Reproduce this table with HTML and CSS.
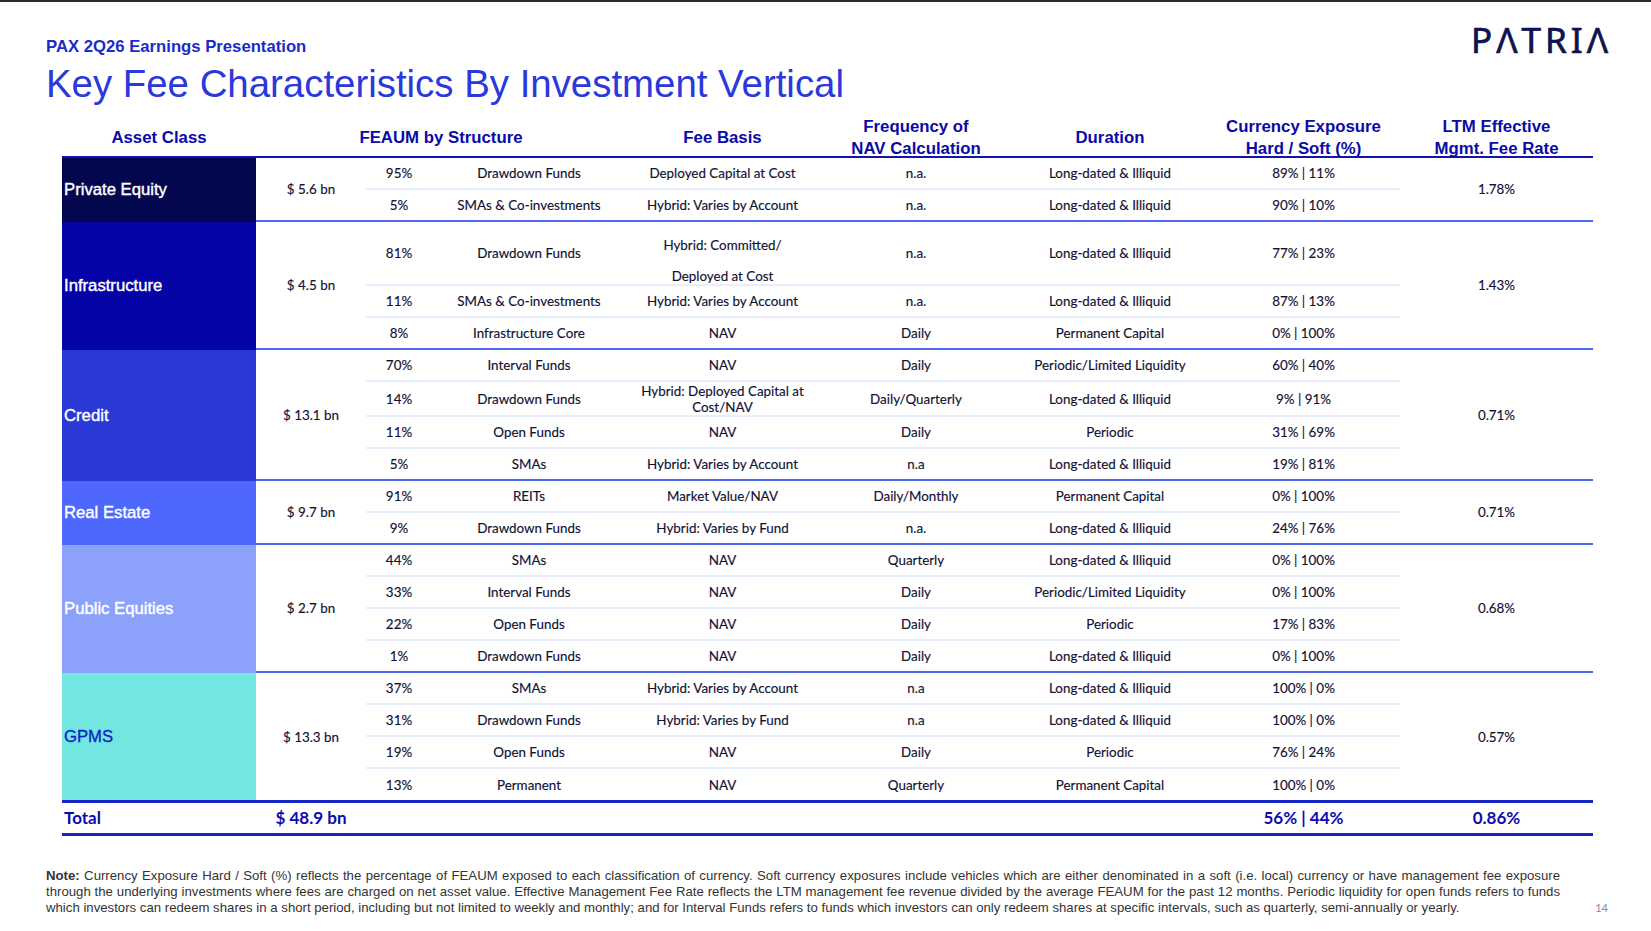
FILE: index.html
```html
<!DOCTYPE html>
<html lang="en">
<head>
<meta charset="utf-8">
<title>Key Fee Characteristics By Investment Vertical</title>
<link rel="stylesheet" href="styles.css">
</head>
<body>
<div class="slide">
  <header class="top">
    <div class="titles">
      <div class="kicker">PAX 2Q26 Earnings Presentation</div>
      <h1 class="title">Key Fee Characteristics By Investment Vertical</h1>
    </div>
    <div class="logo" aria-label="PATRIA">PΛTRIΛ</div>
  </header>

  <table class="fees">
    <colgroup>
      <col class="c-asset"><col class="c-amt"><col class="c-pct"><col class="c-wide"><col class="c-wide2"><col class="c-wide"><col class="c-wide"><col class="c-wide2"><col class="c-wide2">
    </colgroup>
    <thead>
      <tr>
        <th><div class="hd">Asset Class</div></th>
        <th colspan="3"><div class="hd">FEAUM by Structure</div></th>
        <th><div class="hd">Fee Basis</div></th>
        <th><div class="hd">Frequency of<br>NAV Calculation</div></th>
        <th><div class="hd">Duration</div></th>
        <th><div class="hd">Currency Exposure<br>Hard / Soft (%)</div></th>
        <th><div class="hd">LTM Effective<br>Mgmt. Fee Rate</div></th>
      </tr>
    </thead>
    <tbody>
      <!-- Private Equity -->
      <tr>
        <td class="ac pe" rowspan="2">Private Equity</td>
        <td class="amt end" rowspan="2">$ 5.6 bn</td>
        <td class="sub">95%</td><td class="sub">Drawdown Funds</td><td class="sub">Deployed Capital at Cost</td><td class="sub">n.a.</td><td class="sub">Long-dated &amp; Illiquid</td><td class="sub">89% | 11%</td>
        <td class="rate end" rowspan="2">1.78%</td>
      </tr>
      <tr class="last">
        <td class="sub">5%</td><td class="sub">SMAs &amp; Co-investments</td><td class="sub">Hybrid: Varies by Account</td><td class="sub">n.a.</td><td class="sub">Long-dated &amp; Illiquid</td><td class="sub">90% | 10%</td>
      </tr>

      <!-- Infrastructure -->
      <tr class="tall">
        <td class="ac inf" rowspan="3">Infrastructure</td>
        <td class="amt end" rowspan="3">$ 4.5 bn</td>
        <td class="sub">81%</td><td class="sub">Drawdown Funds</td>
        <td class="sub split"><div>Hybrid: Committed/</div><div class="second">Deployed at Cost</div></td>
        <td class="sub">n.a.</td><td class="sub">Long-dated &amp; Illiquid</td><td class="sub">77% | 23%</td>
        <td class="rate end" rowspan="3">1.43%</td>
      </tr>
      <tr>
        <td class="sub">11%</td><td class="sub">SMAs &amp; Co-investments</td><td class="sub">Hybrid: Varies by Account</td><td class="sub">n.a.</td><td class="sub">Long-dated &amp; Illiquid</td><td class="sub">87% | 13%</td>
      </tr>
      <tr class="last">
        <td class="sub">8%</td><td class="sub">Infrastructure Core</td><td class="sub">NAV</td><td class="sub">Daily</td><td class="sub">Permanent Capital</td><td class="sub">0% | 100%</td>
      </tr>

      <!-- Credit -->
      <tr>
        <td class="ac cr" rowspan="4">Credit</td>
        <td class="amt end" rowspan="4">$ 13.1 bn</td>
        <td class="sub">70%</td><td class="sub">Interval Funds</td><td class="sub">NAV</td><td class="sub">Daily</td><td class="sub">Periodic/Limited Liquidity</td><td class="sub">60% | 40%</td>
        <td class="rate end" rowspan="4">0.71%</td>
      </tr>
      <tr class="mid">
        <td class="sub">14%</td><td class="sub">Drawdown Funds</td><td class="sub two">Hybrid: Deployed Capital at<br>Cost/NAV</td><td class="sub">Daily/Quarterly</td><td class="sub">Long-dated &amp; Illiquid</td><td class="sub">9% | 91%</td>
      </tr>
      <tr>
        <td class="sub">11%</td><td class="sub">Open Funds</td><td class="sub">NAV</td><td class="sub">Daily</td><td class="sub">Periodic</td><td class="sub">31% | 69%</td>
      </tr>
      <tr class="last">
        <td class="sub">5%</td><td class="sub">SMAs</td><td class="sub">Hybrid: Varies by Account</td><td class="sub">n.a</td><td class="sub">Long-dated &amp; Illiquid</td><td class="sub">19% | 81%</td>
      </tr>

      <!-- Real Estate -->
      <tr>
        <td class="ac re" rowspan="2">Real Estate</td>
        <td class="amt end" rowspan="2">$ 9.7 bn</td>
        <td class="sub">91%</td><td class="sub">REITs</td><td class="sub">Market Value/NAV</td><td class="sub">Daily/Monthly</td><td class="sub">Permanent Capital</td><td class="sub">0% | 100%</td>
        <td class="rate end" rowspan="2">0.71%</td>
      </tr>
      <tr class="last">
        <td class="sub">9%</td><td class="sub">Drawdown Funds</td><td class="sub">Hybrid: Varies by Fund</td><td class="sub">n.a.</td><td class="sub">Long-dated &amp; Illiquid</td><td class="sub">24% | 76%</td>
      </tr>

      <!-- Public Equities -->
      <tr>
        <td class="ac pub" rowspan="4">Public Equities</td>
        <td class="amt end" rowspan="4">$ 2.7 bn</td>
        <td class="sub">44%</td><td class="sub">SMAs</td><td class="sub">NAV</td><td class="sub">Quarterly</td><td class="sub">Long-dated &amp; Illiquid</td><td class="sub">0% | 100%</td>
        <td class="rate end" rowspan="4">0.68%</td>
      </tr>
      <tr>
        <td class="sub">33%</td><td class="sub">Interval Funds</td><td class="sub">NAV</td><td class="sub">Daily</td><td class="sub">Periodic/Limited Liquidity</td><td class="sub">0% | 100%</td>
      </tr>
      <tr>
        <td class="sub">22%</td><td class="sub">Open Funds</td><td class="sub">NAV</td><td class="sub">Daily</td><td class="sub">Periodic</td><td class="sub">17% | 83%</td>
      </tr>
      <tr class="last">
        <td class="sub">1%</td><td class="sub">Drawdown Funds</td><td class="sub">NAV</td><td class="sub">Daily</td><td class="sub">Long-dated &amp; Illiquid</td><td class="sub">0% | 100%</td>
      </tr>

      <!-- GPMS -->
      <tr>
        <td class="ac gp" rowspan="4">GPMS</td>
        <td class="amt" rowspan="4">$ 13.3 bn</td>
        <td class="sub">37%</td><td class="sub">SMAs</td><td class="sub">Hybrid: Varies by Account</td><td class="sub">n.a</td><td class="sub">Long-dated &amp; Illiquid</td><td class="sub">100% | 0%</td>
        <td class="rate" rowspan="4">0.57%</td>
      </tr>
      <tr>
        <td class="sub">31%</td><td class="sub">Drawdown Funds</td><td class="sub">Hybrid: Varies by Fund</td><td class="sub">n.a</td><td class="sub">Long-dated &amp; Illiquid</td><td class="sub">100% | 0%</td>
      </tr>
      <tr>
        <td class="sub">19%</td><td class="sub">Open Funds</td><td class="sub">NAV</td><td class="sub">Daily</td><td class="sub">Periodic</td><td class="sub">76% | 24%</td>
      </tr>
      <tr class="final">
        <td>13%</td><td>Permanent</td><td>NAV</td><td>Quarterly</td><td>Permanent Capital</td><td>100% | 0%</td>
      </tr>
    </tbody>
    <tfoot>
      <tr class="total">
        <td class="t-label">Total</td>
        <td>$ 48.9 bn</td>
        <td></td><td></td><td></td><td></td><td></td>
        <td>56% | 44%</td>
        <td>0.86%</td>
      </tr>
    </tfoot>
  </table>

  <footer class="note">
    <p class="note-text">
      <span class="line"><b>Note:</b> Currency Exposure Hard / Soft (%) reflects the percentage of FEAUM exposed to each classification of currency. Soft currency exposures include vehicles which are either denominated in a soft (i.e. local) currency or have management fee exposure</span>
      <span class="line">through the underlying investments where fees are charged on net asset value. Effective Management Fee Rate reflects the LTM management fee revenue divided by the average FEAUM for the past 12 months. Periodic liquidity for open funds refers to funds</span>
      <span class="line end-line">which investors can redeem shares in a short period, including but not limited to weekly and monthly; and for Interval Funds refers to funds which investors can only redeem shares at specific intervals, such as quarterly, semi-annually or yearly.</span>
    </p>
    <span class="page">14</span>
  </footer>
</div>
</body>
</html>
```

FILE: styles.css
```css
* { box-sizing: border-box; }

html, body {
  margin: 0;
  padding: 0;
  background: #ffffff;
}

body {
  border-top: 2px solid #2b2b2b;
  font-family: "Liberation Sans", Arial, sans-serif;
  width: 1651px;
  height: 931px;
  overflow: hidden;
}

.slide {
  padding: 0 43px 0 46px;
}

/* ---------- header ---------- */
.top {
  display: flex;
  justify-content: space-between;
  align-items: flex-start;
  padding-top: 20px;
}

.kicker {
  margin-top: 15px;
  font-size: 16.7px;
  line-height: 20px;
  font-weight: bold;
  color: #1b2bc9;
}

.title {
  margin: 5px 0 0;
  font-size: 38.4px;
  line-height: 44px;
  font-weight: normal;
  color: #2a38dc;
}

.logo {
  font-family: "Noto Sans", "DejaVu Sans", sans-serif;
  font-size: 35px;
  line-height: 35px;
  letter-spacing: 4px;
  margin-right: -4px;
  color: #10114f;
  -webkit-text-stroke: 0.7px #10114f;
}

/* ---------- table ---------- */
.fees {
  margin: 13px 0 0 16px;
  width: 1531px;
  border-collapse: separate;
  border-spacing: 0;
  table-layout: fixed;
}

.c-asset { width: 194px; }
.c-amt { width: 110px; }
.c-pct { width: 66px; }
.c-wide { width: 194px; }
.c-wide2 { width: 193px; }

.fees th {
  height: 39px;
  padding: 0;
  border-bottom: 2.5px solid #1313ad;
  font-size: 16.8px;
  line-height: 22px;
  font-weight: bold;
  color: #0a0aa8;
  text-align: center;
  vertical-align: middle;
}

.fees th .hd {
  margin: -4px 0;
}

.fees td {
  padding: 0;
  text-align: center;
  vertical-align: middle;
  font-family: Lato, "Open Sans", sans-serif;
  font-size: 13.4px;
  line-height: 16px;
  color: #111133;
  -webkit-text-stroke: 0.15px #111133;
  white-space: nowrap;
}

.fees tbody tr { height: 32px; }
.fees tbody tr.tall { height: 64px; }
.fees tbody tr.mid { height: 35px; }
.fees tbody tr.final { height: 31px; }

.fees td.sub { border-bottom: 2px solid #e9eefd; }
.fees tr.last td.sub,
.fees td.end { border-bottom: 2px solid #5068ea; }

.fees td.split {
  vertical-align: top;
  padding-top: 15px;
}
.fees td.split .second { margin-top: 15px; }

.fees td.two { line-height: 16px; }

/* asset class cells */
.fees td.ac {
  text-align: left;
  padding-left: 2px;
  font-family: "Liberation Sans", Arial, sans-serif;
  font-size: 16.7px;
  color: #ffffff;
  -webkit-text-stroke: 0.4px #ffffff;
}
.fees td.pe { background: #03084e; }
.fees td.inf { background: #0303a6; }
.fees td.cr { background: #2a38d6; }
.fees td.re { background: #4e67fc; }
.fees td.pub { background: #8ca2fa; }
.fees td.gp {
  background: #72e6e0;
  color: #0d1fc4;
  -webkit-text-stroke: 0.3px #0d1fc4;
}

/* total row */
.fees tr.total td {
  height: 36px;
  border-top: 3px solid #1424c4;
  border-bottom: 3px solid #1424c4;
  font-family: Lato, "Open Sans", sans-serif;
  font-size: 17px;
  font-weight: bold;
  color: #0b0bb0;
  -webkit-text-stroke: 0;
}
.fees tr.total td.t-label {
  text-align: left;
  padding-left: 2px;
}

/* ---------- footnote ---------- */
.note {
  display: flex;
  justify-content: space-between;
  align-items: flex-end;
  margin-top: 32px;
}

.note-text {
  margin: 0;
  width: 1514px;
  font-size: 13.2px;
  line-height: 16px;
  color: #333333;
}

.note-text .line {
  display: block;
  white-space: nowrap;
  text-align: justify;
  text-align-last: justify;
}

.note-text .line.end-line {
  text-align: left;
  text-align-last: left;
}

.page {
  font-family: Lato, "Open Sans", sans-serif;
  font-size: 11px;
  line-height: 14px;
  color: #8c8c8c;
  margin-bottom: 1px;
}
```
